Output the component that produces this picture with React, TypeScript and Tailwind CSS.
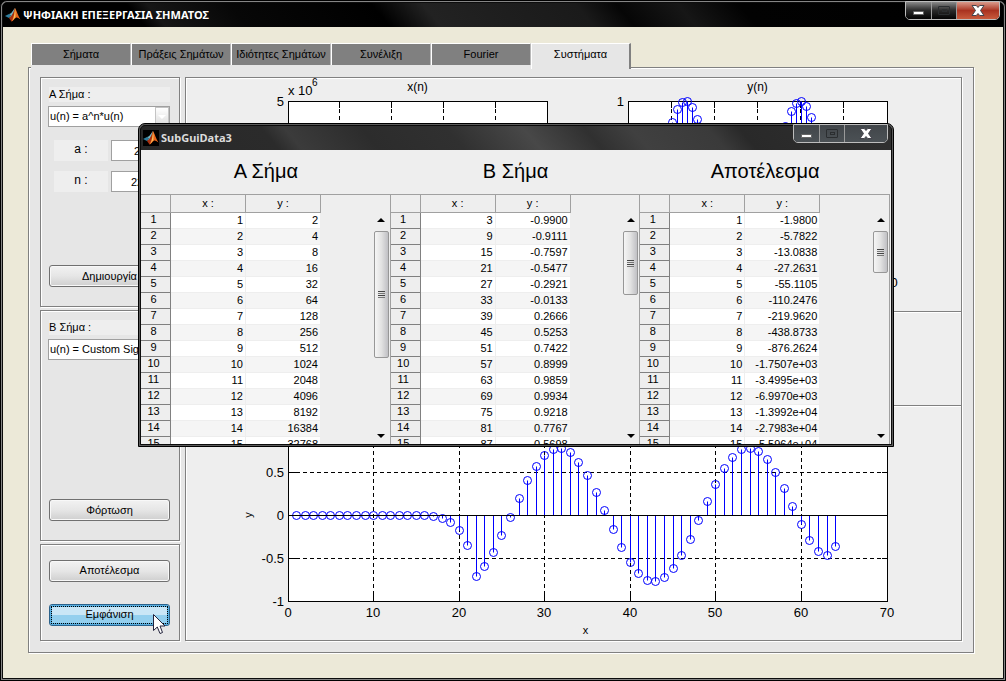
import type { ReactNode } from "react";
import clsx from "clsx";

const etched = "border border-[#808080] shadow-[1px_1px_0_#fff,inset_1px_1px_0_#fff]";

const tabs = ["Σήματα", "Πράξεις Σημάτων", "Ιδιότητες Σημάτων", "Συνέλιξη", "Fourier", "Συστήματα"];

const tables = [
  {
    title: "Α Σήμα",
    thumb: "h-[127px]",
    rows: [
      ["1", "2"], ["2", "4"], ["3", "8"], ["4", "16"], ["5", "32"], ["6", "64"], ["7", "128"], ["8", "256"],
      ["9", "512"], ["10", "1024"], ["11", "2048"], ["12", "4096"], ["13", "8192"], ["14", "16384"], ["15", "32768"]
    ]
  },
  {
    title: "Β Σήμα",
    thumb: "h-[64px]",
    rows: [
      ["3", "-0.9900"], ["9", "-0.9111"], ["15", "-0.7597"], ["21", "-0.5477"], ["27", "-0.2921"],
      ["33", "-0.0133"], ["39", "0.2666"], ["45", "0.5253"], ["51", "0.7422"], ["57", "0.8999"],
      ["63", "0.9859"], ["69", "0.9934"], ["75", "0.9218"], ["81", "0.7767"], ["87", "0.5698"]
    ]
  },
  {
    title: "Αποτέλεσμα",
    thumb: "h-[42px]",
    rows: [
      ["1", "-1.9800"], ["2", "-5.7822"], ["3", "-13.0838"], ["4", "-27.2631"], ["5", "-55.1105"],
      ["6", "-110.2476"], ["7", "-219.9620"], ["8", "-438.8733"], ["9", "-876.2624"], ["10", "-1.7507e+03"],
      ["11", "-3.4995e+03"], ["12", "-6.9970e+03"], ["13", "-1.3992e+04"], ["14", "-2.7983e+04"], ["15", "-5.5964e+04"]
    ]
  }
];

// signal A is 2^n, signal B a sampled cosine, the result is their convolution
type Point = { n: number; v: number };
const signalA: Point[] = Array.from({ length: 22 }, (_, i) => ({ n: i + 1, v: 2 ** (i + 1) / 1e6 }));
const signalB: Point[] = Array.from({ length: 43 }, (_, i) => {
  const n = 3 + 6 * i;
  return { n, v: -Math.cos((2.7042 * n * Math.PI) / 180) };
});
const result: Point[] = Array.from({ length: 64 }, (_, k) => {
  let sum = 0;
  signalA.forEach((a, i) => {
    const b = signalB[k - i];
    if (b) sum += a.v * b.v;
  });
  return { n: k + 1, v: sum / 10 };
});

function MatlabLogo() {
  return (
    <svg viewBox="0 0 16 16" className="h-4 w-4 shrink-0 bg-black" aria-hidden="true">
      <path d="M0 9 L4 7 L6 8.5 L4 11 Z" fill="#2f7fa0" />
      <path d="M4 7 C7 6.500 8 3 10 1 L9 6 L6 10 L4 11 L6 8.500 Z" fill="#6fb5c4" />
      <path d="M10 1 C8.500 5 7.500 8.500 4 11 L6.500 14.500 C8 14 9 11 10.500 10.500 Z" fill="#a83010" />
      <path d="M10 1 C11.500 3 13 9 15.500 12.500 C13 11 12 10 10.500 11 C9 12 8 14 6.500 14.500 C9 10 9.500 5 10 1 Z" fill="#e8641b" />
      <path d="M10 1 C10.500 4 10.800 7 10.300 10.500 C9 11 8.500 13 7.500 13.500 C9.300 10 9.700 5 10 1 Z" fill="#f9c15a" />
    </svg>
  );
}

function WindowControls({ active }: { active?: boolean }) {
  const base = active
    ? "bg-linear-to-b from-[#8b8b8b] via-[#2a2a2a] to-[#050505]"
    : "bg-linear-to-b from-[#42464a] to-[#4b5155]";
  return (
    <div className="absolute top-0 right-[5px] flex h-[19px] overflow-hidden rounded-b-[5px] border border-[#bdbdbd]">
      <button aria-label="Minimize" className={clsx("flex w-[25px] items-center justify-center pt-1", base)}>
        <span className="h-[4px] w-[11px] rounded-[1px] border border-[#666] bg-white" />
      </button>
      <button aria-label="Maximize" disabled className={clsx("flex w-[26px] items-center justify-center border-x border-[#9a9a9a]", base)}>
        <span className="flex h-[9px] w-[12px] items-center justify-center rounded-[1px] border border-[#2b2e30]">
          <span className="h-[3px] w-[5px] border border-[#2b2e30]" />
        </span>
      </button>
      <button
        aria-label="Close"
        className={clsx("flex w-[42px] items-center justify-center", active ? "bg-linear-to-b from-[#d99a8c] via-[#a93220] to-[#c85a3c]" : base)}
      >
        <svg viewBox="0 0 14 11" className="h-[11px] w-[14px]" aria-hidden="true">
          <path d="M1 .5 H5.300 L7 2.500 L8.700 .5 H13 L9.500 5.500 L13 10.500 H8.700 L7 8.500 L5.300 10.500 H1 L4.500 5.500 Z" fill="#fff" stroke="#44444c" strokeWidth="1" />
        </svg>
      </button>
    </div>
  );
}

function Frame({ title, active, className, children }: { title: string; active?: boolean; className?: string; children: ReactNode }) {
  return (
    <div className={clsx("flex flex-col rounded-t-[7px] border border-black p-px", active ? "bg-[#858585]" : "bg-[#5c5c5c]", className)}>
      <div className="flex grow flex-col overflow-hidden rounded-t-[5px] border border-[#0c0c0c] bg-black">
        <header
          className={clsx(
            "flex h-6 shrink-0 items-center gap-[2px] px-[2px]",
            active
              ? "bg-[linear-gradient(50deg,#000_0%,#000_14%,#161616_16%,#070707_24%,#000_38%,#222_43%,#1a1a1a_58%,#060606_62%,#161616_68%,#020202_74%,#000_100%)]"
              : "bg-[linear-gradient(50deg,#282828_0%,#2b2b2b_18%,#3b3b3b_21%,#2c2c2c_31%,#303030_42%,#484848_52%,#303030_60%,#404040_66%,#3a3a3a_76%,#292929_80%,#303030_100%)]"
          )}
        >
          <MatlabLogo />
          <h1 className={clsx("font-['Noto_Sans',sans-serif] text-[11px] leading-4 font-bold whitespace-nowrap", active ? "text-white" : "text-[#dcdcdc]")}>
            {title}
          </h1>
        </header>
        {children}
      </div>
      <WindowControls active={active} />
    </div>
  );
}

function PushButton({ children, focused }: { children: ReactNode; focused?: boolean }) {
  return (
    <button
      className={clsx(
        "ml-px flex h-[22px] items-center justify-center rounded-[3px] border p-px",
        focused
          ? "border-[#2c628b] bg-linear-to-b from-[#c9e6f6] from-50% to-[#93cfee] to-50% shadow-[inset_0_0_0_2px_#58afe0]"
          : "border-[#707070] bg-linear-to-b from-[#f2f2f2] via-[#e6e6e6] via-50% to-[#cfcfcf] shadow-[inset_0_0_0_1px_#f8f8f8]"
      )}
    >
      <span className={clsx("flex h-full w-full items-center justify-center", focused && "border border-dotted border-black")}>{children}</span>
    </button>
  );
}

function SignalSelect({ id, label, value }: { id: string; label: string; value: string }) {
  return (
    <div className="flex flex-col gap-1">
      <label htmlFor={id} className="ml-px bg-[#eee] leading-[15px]">{label}</label>
      <div className="relative flex">
        <select id={id} className="h-[21px] w-full appearance-none border border-[#a0a0a0] bg-white pl-px text-[11px]">
          <option>{value}</option>
        </select>
        <span className="pointer-events-none absolute top-px right-px flex h-[19px] w-[14px] items-center justify-center border border-[#c4c4c4] bg-linear-to-b from-white to-[#ddd]">
          <span className="h-0 w-0 border-x-4 border-t-4 border-x-transparent border-t-white" />
        </span>
      </div>
    </div>
  );
}

function Param({ id, label, value }: { id: string; label: string; value: string }) {
  return (
    <div className="flex gap-[3px] pl-[6px]">
      <label htmlFor={id} className="h-[21px] w-[54px] bg-[#eee] text-center text-[12px] leading-[18px]">{label}</label>
      <input id={id} defaultValue={value} className="h-[21px] w-[52px] border border-[#a0a0a0] bg-white text-center text-[11px]" />
    </div>
  );
}

type PlotProps = {
  width: number;
  height: number;
  left: number;
  top: number;
  w: number;
  h: number;
  xs: number[];
  ys: number[];
  points: Point[];
  title?: string;
  exponent?: boolean;
  axisLabels?: boolean;
};

function StemPlot({ width, height, left, top, w, h, xs, ys, points, title, exponent, axisLabels }: PlotProps) {
  const xMax = xs[xs.length - 1];
  const yMin = ys[0];
  const yMax = ys[ys.length - 1];
  const px = (n: number) => Math.floor(left + (n / xMax) * w);
  const py = (v: number) => Math.floor(top + ((yMax - v) / (yMax - yMin)) * h);
  return (
    <svg width={width} height={height} className="shrink-0 overflow-visible text-[13px]">
      <rect x={left} y={top} width={w} height={h} fill="#fff" />
      <g stroke="#000" strokeWidth="1" shapeRendering="crispEdges" transform="translate(.5 .5)">
        {xs.slice(1, -1).map((x) => (
          <g key={x}>
            <path d={`M${px(x)} ${top}V${top + h}`} strokeDasharray="4 3" />
            <path d={`M${px(x)} ${top + h}v-7M${px(x)} ${top}v6`} />
          </g>
        ))}
        {ys.slice(1, -1).map((y) => (
          <g key={y}>
            <path d={`M${left} ${py(y)}H${left + w}`} strokeDasharray="4 3" />
            <path d={`M${left} ${py(y)}h8M${left + w} ${py(y)}h-6`} />
          </g>
        ))}
        <rect x={left} y={top} width={w} height={h} fill="none" />
      </g>
      <g stroke="#00f" fill="none" transform="translate(.5 .5)">
        {points.map((p) => (
          <g key={p.n}>
            <path d={`M${px(p.n)} ${py(0)}V${py(p.v)}`} />
            <circle cx={px(p.n)} cy={py(p.v)} r="4" />
          </g>
        ))}
      </g>
      <path d={`M${left} ${py(0) + 0.5}H${left + w}`} stroke="#000" shapeRendering="crispEdges" />
      <g textAnchor="middle">
        {xs.map((x) => (
          <text key={x} x={px(x)} y={top + h + 16}>{x}</text>
        ))}
      </g>
      <g textAnchor="end">
        {ys.map((y) => (
          <text key={y} x={left - 4} y={py(y) + 5}>{y}</text>
        ))}
      </g>
      {title && <text x={left + w / 2} y={top - 10} textAnchor="middle" className="text-[12px]">{title}</text>}
      {exponent && (
        <>
          <text x={left} y={top - 6}>x 10</text>
          <text x={left + 24} y={top - 15} className="text-[10px]">6</text>
        </>
      )}
      {axisLabels && (
        <>
          <text x={left + w / 2 - 2} y={top + h + 33} textAnchor="middle" className="text-[11px]">x</text>
          <text transform={`translate(${left - 36} ${top + h / 2}) rotate(-90)`} textAnchor="middle" className="text-[11px]">y</text>
        </>
      )}
    </svg>
  );
}

function DataTable({ rows, thumb }: { rows: string[][]; thumb: string }) {
  return (
    <div className="flex h-[249px] flex-1 justify-between overflow-hidden border-r border-[#a0a0a0]">
      <table className="h-fit w-[180px] table-fixed border-separate border-spacing-0">
        <thead>
          <tr className="h-[18px] leading-[17px]">
            <th className="w-[30px] border-r border-b border-[#a0a0a0] p-0" />
            <th className="border-r border-b border-[#a0a0a0] p-0 font-normal">x :</th>
            <th className="border-r border-b border-[#a0a0a0] p-0 font-normal">y :</th>
          </tr>
        </thead>
        <tbody>
          {rows.map(([x, y], i) => (
            <tr key={x} className={clsx("h-4 leading-[15px]", i % 2 ? "bg-[#f5f5f5]" : "bg-white")}>
              <th className="border-r border-b border-[#808080] bg-[#eee] p-0 pr-1 align-top font-normal leading-[13px]">{i + 1}</th>
              <td className="border-r border-b border-[#eee] p-0 pr-[2px] text-right">{x}</td>
              <td className="border-r border-b border-[#eee] p-0 pr-[2px] text-right">{y}</td>
            </tr>
          ))}
        </tbody>
      </table>
      <div className="flex w-[17px] flex-col items-center pt-[23px] pb-[6px]">
        <span className="mb-[9px] h-0 w-0 border-x-4 border-b-4 border-x-transparent border-b-black" />
        <span className={clsx("flex w-[15px] shrink-0 flex-col items-center justify-center gap-px rounded-[2px] border border-[#979797] bg-linear-to-r from-[#f5f5f5] via-[#e2e2e2] to-[#c0c0c4]", thumb)}>
          <span className="h-px w-[7px] bg-[#444]" />
          <span className="h-px w-[7px] bg-[#777]" />
          <span className="h-px w-[7px] bg-[#444]" />
          <span className="h-px w-[7px] bg-[#777]" />
        </span>
        <span className="mt-auto h-0 w-0 border-x-4 border-t-4 border-x-transparent border-t-black" />
      </div>
    </div>
  );
}

function DataWindow() {
  return (
    <Frame title="SubGuiData3" className="absolute top-[123px] left-[138px] w-[756px]">
      <div className="bg-[#eee] pr-px">
        <div className="flex h-11 text-[20px] leading-[42px]">
          {tables.map((t) => (
            <h2 key={t.title} className="flex-1 text-center">{t.title}</h2>
          ))}
        </div>
        <div className="flex border-t border-[#a0a0a0]">
          {tables.map((t) => (
            <DataTable key={t.title} rows={t.rows} thumb={t.thumb} />
          ))}
        </div>
      </div>
    </Frame>
  );
}

export default function App() {
  return (
    <div className="relative bg-black font-['Liberation_Sans',Arial,sans-serif] text-[11px] text-black">
      <Frame title="ΨΗΦΙΑΚΗ ΕΠΕΞΕΡΓΑΣΙΑ ΣΗΜΑΤΟΣ" active className="relative min-h-screen">
        <main className="flex grow flex-col bg-[#ece9d8] pt-4 pr-[29px] pb-[25px] pl-[25px]">
          <nav className="relative z-10 ml-[3px] -mb-[2px] flex h-[26px] w-fit bg-[#e6e6e6]">
            {tabs.map((tab, i) => {
              const selected = i === tabs.length - 1;
              return (
                <button
                  key={tab}
                  className={clsx(
                    "w-[100px] border-t border-l border-white text-center whitespace-nowrap",
                    selected ? "h-[26px] border-r-2 border-r-[#808080] bg-[#e6e6e6] pb-1" : "h-[22px] border-r border-r-[#b8b8b8] bg-[#808080]"
                  )}
                >
                  {tab}
                </button>
              );
            })}
          </nav>
          <div className={clsx("flex grow gap-[5px] bg-[#e6e6e6] pt-[9px] pr-[11px] pb-[11px] pl-[11px]", etched)}>
            <aside className="flex w-[140px] shrink-0 flex-col gap-[3px]">
              <section className={clsx("flex h-[230px] flex-col pt-[9px] pr-[9px] pb-[19px] pl-[7px]", etched)}>
                <SignalSelect id="signal-a" label="Α Σήμα :" value="u(n) = a^n*u(n)" />
                <div className="mt-[13px] flex flex-col gap-[10px]">
                  <Param id="param-a" label="a :" value="2" />
                  <Param id="param-n" label="n :" value="22" />
                </div>
                <div className="mt-auto flex flex-col">
                  <PushButton>Δημιουργία</PushButton>
                </div>
              </section>
              <section className={clsx("flex h-[231px] flex-col pt-[9px] pr-[9px] pb-[19px] pl-[7px]", etched)}>
                <SignalSelect id="signal-b" label="Β Σήμα :" value="u(n) = Custom Signal" />
                <div className="mt-auto flex flex-col">
                  <PushButton>Φόρτωση</PushButton>
                </div>
              </section>
              <section className={clsx("flex grow flex-col justify-center gap-[22px] pr-[9px] pl-[7px]", etched)}>
                <PushButton>Αποτέλεσμα</PushButton>
                <PushButton focused>Εμφάνιση</PushButton>
              </section>
            </aside>
            <div className="flex min-w-0 grow flex-col bg-[#eee]">
              <section className={clsx("flex h-[235px]", etched)}>
                <StemPlot
                  width={390} height={220} left={102} top={23} w={259} h={170}
                  xs={[0, 5, 10, 15, 20, 25]} ys={[0, 1, 2, 3, 4, 5]}
                  points={signalA} title="x(n)" exponent
                />
                <StemPlot
                  width={350} height={220} left={52} top={23} w={259} h={170}
                  xs={[0, 50, 100, 150, 200, 250, 300]} ys={[-1, -0.5, 0, 0.5, 1]}
                  points={signalB} title="y(n)"
                />
              </section>
              <section className={clsx("h-[94px] border-t-0", etched)} />
              <section className={clsx("grow border-t-0", etched)}>
                <StemPlot
                  width={740} height={230} left={102} top={23} w={599} h={172}
                  xs={[0, 10, 20, 30, 40, 50, 60, 70]} ys={[-1, -0.5, 0, 0.5, 1]}
                  points={result} axisLabels
                />
              </section>
            </div>
          </div>
        </main>
      </Frame>
      <DataWindow />
      <svg viewBox="0 0 13 21" className="pointer-events-none absolute top-[614px] left-[153px] h-[21px] w-[13px]" aria-hidden="true">
        <path d="M.5 .5 V16.500 L4.300 13 L7 19.500 L9.500 18.500 L7 12 H12 Z" fill="#fff" stroke="#23233c" />
      </svg>
    </div>
  );
}
